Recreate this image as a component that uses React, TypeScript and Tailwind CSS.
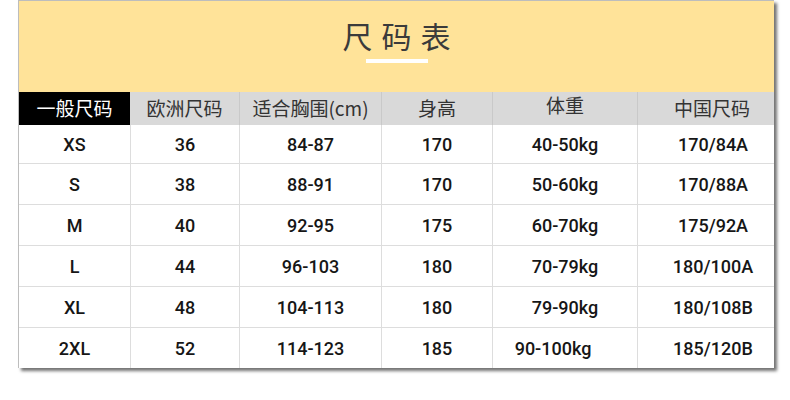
const cols = [
  { title: "一般尺码", w: "w-[111px]" },
  { title: "欧洲尺码", w: "w-[109px]" },
  { title: "适合胸围(cm)", w: "w-[142px]" },
  { title: "身高", w: "w-[111px]" },
  { title: "体重", w: "w-[145px]" },
  { title: "中国尺码", w: "w-[137px]" },
];

const rows = [
  ["XS", "36", "84-87", "170", "40-50kg", "170/84A"],
  ["S", "38", "88-91", "170", "50-60kg", "170/88A"],
  ["M", "40", "92-95", "175", "60-70kg", "175/92A"],
  ["L", "44", "96-103", "180", "70-79kg", "180/100A"],
  ["XL", "48", "104-113", "180", "79-90kg", "180/108B"],
  ["2XL", "52", "114-123", "185", "90-100kg", "185/120B"],
];

const cjk = "font-['Noto_Sans_CJK_SC',sans-serif]";

const App = () => {
  return (
    <div className="w-[790px] h-[400px] bg-white">
      <section className="ml-[18px] w-[756px] border-l border-t border-[#bdbdbd] bg-white shadow-[3px_3px_3px_rgba(0,0,0,0.55)]">
        {/* TITLE */}
        <div className="h-[91px] bg-[#ffe399] flex flex-col items-center pt-[12px]">
          <h1 className={`${cjk} text-[30px] leading-[44px] tracking-[9px] pl-[9px] text-[#3b3b3b] font-normal`}>
            尺码表
          </h1>
          <div className="mt-[2px] w-[62px] h-[4px] bg-white" />
        </div>

        {/* HEADER */}
        <div className="flex h-[33px] bg-[#d9d9d9]">
          {cols.map((c, i) => (
            <div
              key={c.title}
              className={`${c.w} ${cjk} flex items-center justify-center text-[19px] ${
                i === 0 ? "bg-black text-white" : "text-[#333]"
              } ${i > 1 ? "border-l border-[#c9c9c9]" : ""} ${i === 4 ? "pb-[6px]" : ""} ${
                i === 5 ? "pl-[12px]" : ""
              }`}
            >
              {c.title}
            </div>
          ))}
        </div>

        {/* ROWS */}
        {rows.map((r, ri) => (
          <div
            key={r[0]}
            className={`flex ${ri === 0 ? "h-[38px]" : "h-[41px] border-t border-[#dddddd]"}`}
          >
            {r.map((v, i) => (
              <div
                key={i}
                className={`${cols[i].w} flex items-center justify-center font-['Roboto',sans-serif] font-medium text-[18px] text-[#161616] ${
                  i > 0 ? "border-l border-[#dddddd]" : ""
                } ${i === 5 ? "pl-[14px]" : ""} ${ri === 5 && i === 4 ? "pr-[24px]" : ""}`}
              >
                {v}
              </div>
            ))}
          </div>
        ))}
      </section>
    </div>
  );
};

export default App;
